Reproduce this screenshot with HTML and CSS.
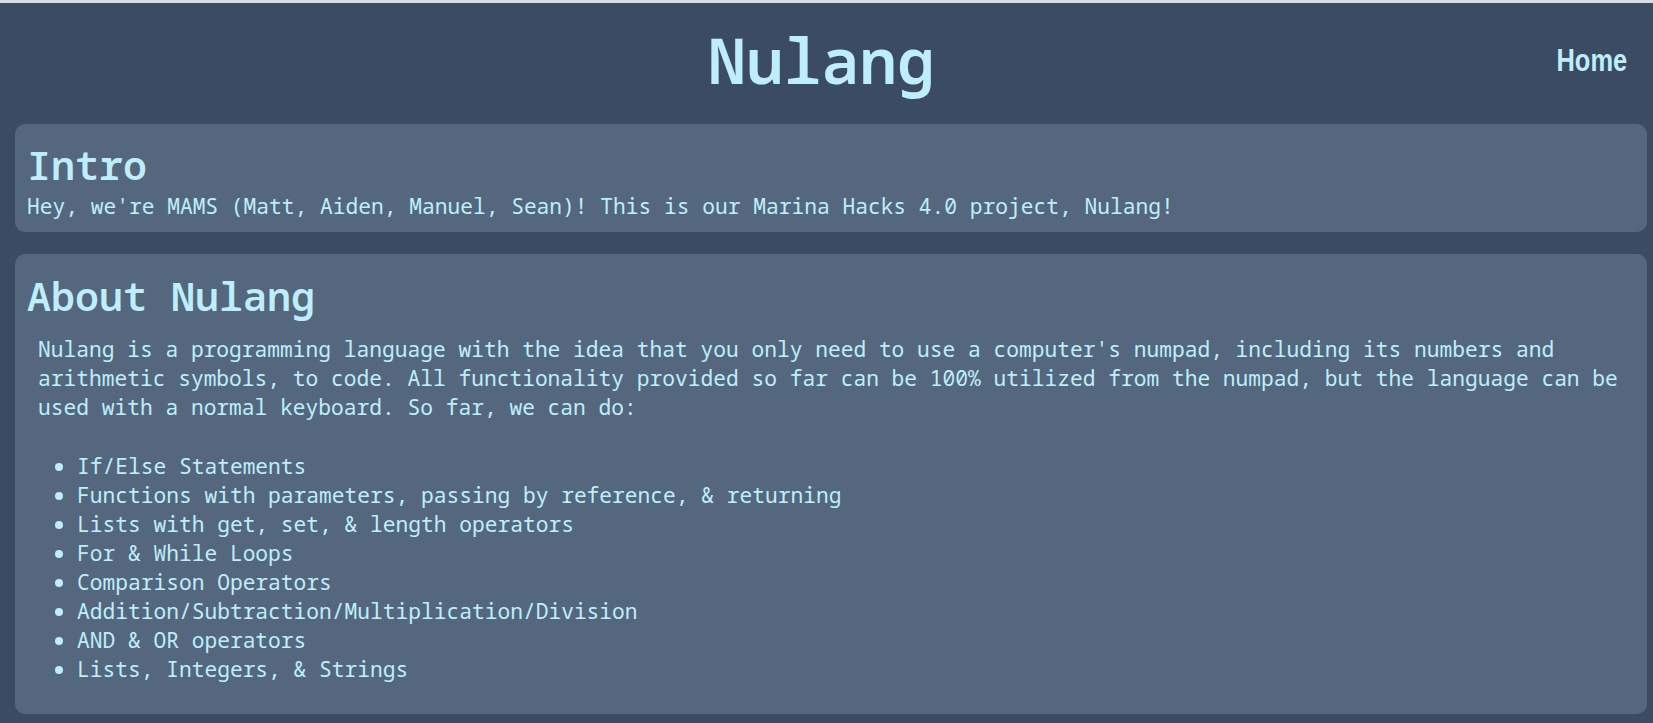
FILE: index.html
```html
<!DOCTYPE html>
<html lang="en">
<head>
<meta charset="utf-8">
<title>Nulang</title>
<link rel="stylesheet" href="styles.css">
</head>
<body>
<header class="site-header">
  <div class="spacer"></div>
  <h1 class="site-title">Nulang</h1>
  <nav class="site-nav"><a class="nav-link" href="#">Home</a></nav>
</header>
<main class="content">
  <section class="card card-intro">
    <h2 class="card-title">Intro</h2>
    <div class="card-text">Hey, we're MAMS (Matt, Aiden, Manuel, Sean)! This is our Marina Hacks 4.0 project, Nulang!</div>
  </section>
  <section class="card card-about">
    <h2 class="card-title">About Nulang</h2>
    <div class="card-body">
      <p class="about-text">Nulang is a programming language with the idea that you only need to use a computer's numpad, including its numbers and arithmetic symbols, to code. All functionality provided so far can be 100% utilized from the numpad, but the language can be used with a normal keyboard. So far, we can do:</p>
      <ul class="feature-list">
        <li>If/Else Statements</li>
        <li>Functions with parameters, passing by reference, &amp; returning</li>
        <li>Lists with get, set, &amp; length operators</li>
        <li>For &amp; While Loops</li>
        <li>Comparison Operators</li>
        <li>Addition/Subtraction/Multiplication/Division</li>
        <li>AND &amp; OR operators</li>
        <li>Lists, Integers, &amp; Strings</li>
      </ul>
    </div>
  </section>
</main>
</body>
</html>
```

FILE: styles.css
```css
html, body {
  margin: 0;
  padding: 0;
}

body {
  background: #3c4b64;
  border-top: 3px solid #d9dadc;
  color: #bdeefa;
  font-family: "Noto Sans Mono", "Droid Sans Mono", "DejaVu Sans Mono", "Liberation Mono", monospace;
  font-size: 21.24px;
  overflow: hidden;
}

.site-header {
  display: grid;
  grid-template-columns: 1fr auto 1fr;
  align-items: start;
  padding: 22px 0 23px;
}

.site-title {
  margin: -3.5px 0 3.5px -10px;
  font-size: 63px;
  font-weight: 600;
  line-height: 75.7px;
}

.site-nav {
  justify-self: end;
  margin-top: 17.5px;
  margin-right: 26px;
}

.nav-link {
  display: inline-block;
  color: #bdeefa;
  text-decoration: none;
  font-family: "Liberation Sans Narrow", "Arial Narrow", "Liberation Sans", Arial, sans-serif;
  font-weight: bold;
  font-size: 31px;
  line-height: 35.6px;
  transform: scaleX(0.82);
  transform-origin: right center;
}

.content {
  display: flex;
  flex-direction: column;
  gap: 22.5px;
  margin: 0 6px 0 15px;
}

.card {
  background: #55677e;
  border-radius: 10px;
  padding: 15.5px 12px 12px;
}

.card-title {
  margin: 0;
  font-size: 40px;
  font-weight: 600;
  line-height: 51.7px;
}

.card-text {
  line-height: 29px;
}

.card-body {
  padding-left: 11px;
  margin-top: 12.7px;
}

.about-text {
  margin: 0;
  line-height: 29px;
}

.feature-list {
  margin: 30px 0 19px;
  padding-left: 39px;
  line-height: 29px;
}
```
